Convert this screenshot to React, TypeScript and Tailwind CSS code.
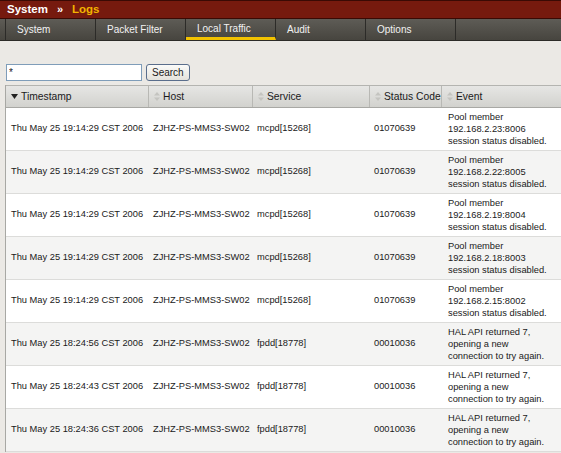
const tabs = ["System", "Packet Filter", "Local Traffic", "Audit", "Options"];

const pool = (ip: string) => ["Pool member", ip, "session status disabled."];
const hal = ["HAL API returned 7,", "opening a new", "connection to try again."];

const rows = [
  { ts: "Thu May 25 19:14:29 CST 2006", svc: "mcpd[15268]", code: "01070639", ev: pool("192.168.2.23:8006") },
  { ts: "Thu May 25 19:14:29 CST 2006", svc: "mcpd[15268]", code: "01070639", ev: pool("192.168.2.22:8005") },
  { ts: "Thu May 25 19:14:29 CST 2006", svc: "mcpd[15268]", code: "01070639", ev: pool("192.168.2.19:8004") },
  { ts: "Thu May 25 19:14:29 CST 2006", svc: "mcpd[15268]", code: "01070639", ev: pool("192.168.2.18:8003") },
  { ts: "Thu May 25 19:14:29 CST 2006", svc: "mcpd[15268]", code: "01070639", ev: pool("192.168.2.15:8002") },
  { ts: "Thu May 25 18:24:56 CST 2006", svc: "fpdd[18778]", code: "00010036", ev: hal },
  { ts: "Thu May 25 18:24:43 CST 2006", svc: "fpdd[18778]", code: "00010036", ev: hal },
  { ts: "Thu May 25 18:24:36 CST 2006", svc: "fpdd[18778]", code: "00010036", ev: hal },
];

function SortIcon() {
  return (
    <svg width="6" height="9" viewBox="0 0 6 9" className="shrink-0">
      <path d="M3 0 L6 3.5 L0 3.5 Z" fill="#c4c4c0" />
      <path d="M3 9 L6 5.5 L0 5.5 Z" fill="#c4c4c0" />
    </svg>
  );
}

function DownIcon() {
  return (
    <svg width="7" height="5" viewBox="0 0 7 5" className="shrink-0">
      <path d="M0 0 L7 0 L3.5 5 Z" fill="#222" />
    </svg>
  );
}

const headers = [
  { label: "Timestamp", w: "w-[143px]", active: true },
  { label: "Host", w: "w-[104px]" },
  { label: "Service", w: "w-[117px]" },
  { label: "Status Code", w: "w-[72px]" },
  { label: "Event", w: "w-[125px]" },
];

export default function App() {
  return (
    <div
      className="w-[561px] h-[453px] overflow-hidden bg-[#ebe9e5] text-[#1a1a1a]"
      style={{ fontFamily: '"Liberation Sans", Arial, sans-serif' }}
    >
      {/* Title bar */}
      <div className="h-[19px] bg-[#761a0e] border-t border-[#3a0a04] border-b border-b-[#3a0a04] flex items-center pl-[7px] gap-[9px] text-[11.5px] font-bold leading-none">
        <span className="text-white">System</span>
        <span className="text-white text-[11px]">»</span>
        <span className="text-[#f2b400]">Logs</span>
      </div>

      {/* Tabs */}
      <div className="h-[22px] flex bg-gradient-to-b from-[#5e5c56] to-[#47453f] border-b border-[#2c2b28] text-[10px] text-[#f2f2f2]">
        <div className="w-[6px] border-r border-[#2c2b28]" />
        {tabs.map((t) => (
          <div
            key={t}
            className={`w-[90px] flex items-center pl-[11px] border-r border-[#2c2b28] ${
              t === "Local Traffic" ? "border-b-[3px] border-b-[#f2c200] pt-[1px]" : ""
            }`}
          >
            {t}
          </div>
        ))}
        <div className="flex-1" />
      </div>

      {/* Search */}
      <div className="flex items-center gap-[4px] pl-[6px] pt-[23px] pb-[4px]">
        <input
          defaultValue="*"
          className="w-[136px] h-[17px] bg-white border border-[#7f9db9] px-[2px] text-[10px] outline-none"
        />
        <button className="h-[17px] px-[5px] bg-gradient-to-b from-[#fbfbf9] to-[#e4e2dc] border border-[#5a6e8c] rounded-[3px] text-[10px] leading-none">
          Search
        </button>
      </div>

      {/* Table */}
      <div className="ml-[5px] border-l border-[#a8a8a4] text-[9.3px]">
        <div className="flex h-[23px] bg-gradient-to-b from-[#e6e6e4] to-[#d2d2ce] border-t border-[#b4b4b0] border-b border-b-[#a8a8a4]">
          {headers.map((h) => (
            <div
              key={h.label}
              className={`${h.w} shrink-0 flex items-center gap-[3px] pl-[5px] border-r border-[#b8b8b4] text-[10.3px]`}
            >
              {h.active ? <DownIcon /> : <SortIcon />}
              <span>{h.label}</span>
            </div>
          ))}
        </div>
        {rows.map((r, i) => (
          <div
            key={i}
            className={`flex h-[43px] items-center border-b border-[#dcdcda] ${
              i % 2 === 0 ? "bg-white" : "bg-[#f4f4f3]"
            }`}
          >
            <div className="w-[143px] shrink-0 pl-[5px] whitespace-nowrap">{r.ts}</div>
            <div className="w-[104px] shrink-0 pl-[4px] whitespace-nowrap">ZJHZ-PS-MMS3-SW02</div>
            <div className="w-[117px] shrink-0 pl-[4px]">{r.svc}</div>
            <div className="w-[72px] shrink-0 pl-[4px]">{r.code}</div>
            <div className="w-[125px] shrink-0 pl-[6px] leading-[12px] whitespace-nowrap">
              {r.ev.map((l, j) => (
                <div key={j}>{l}</div>
              ))}
            </div>
          </div>
        ))}
      </div>
    </div>
  );
}
